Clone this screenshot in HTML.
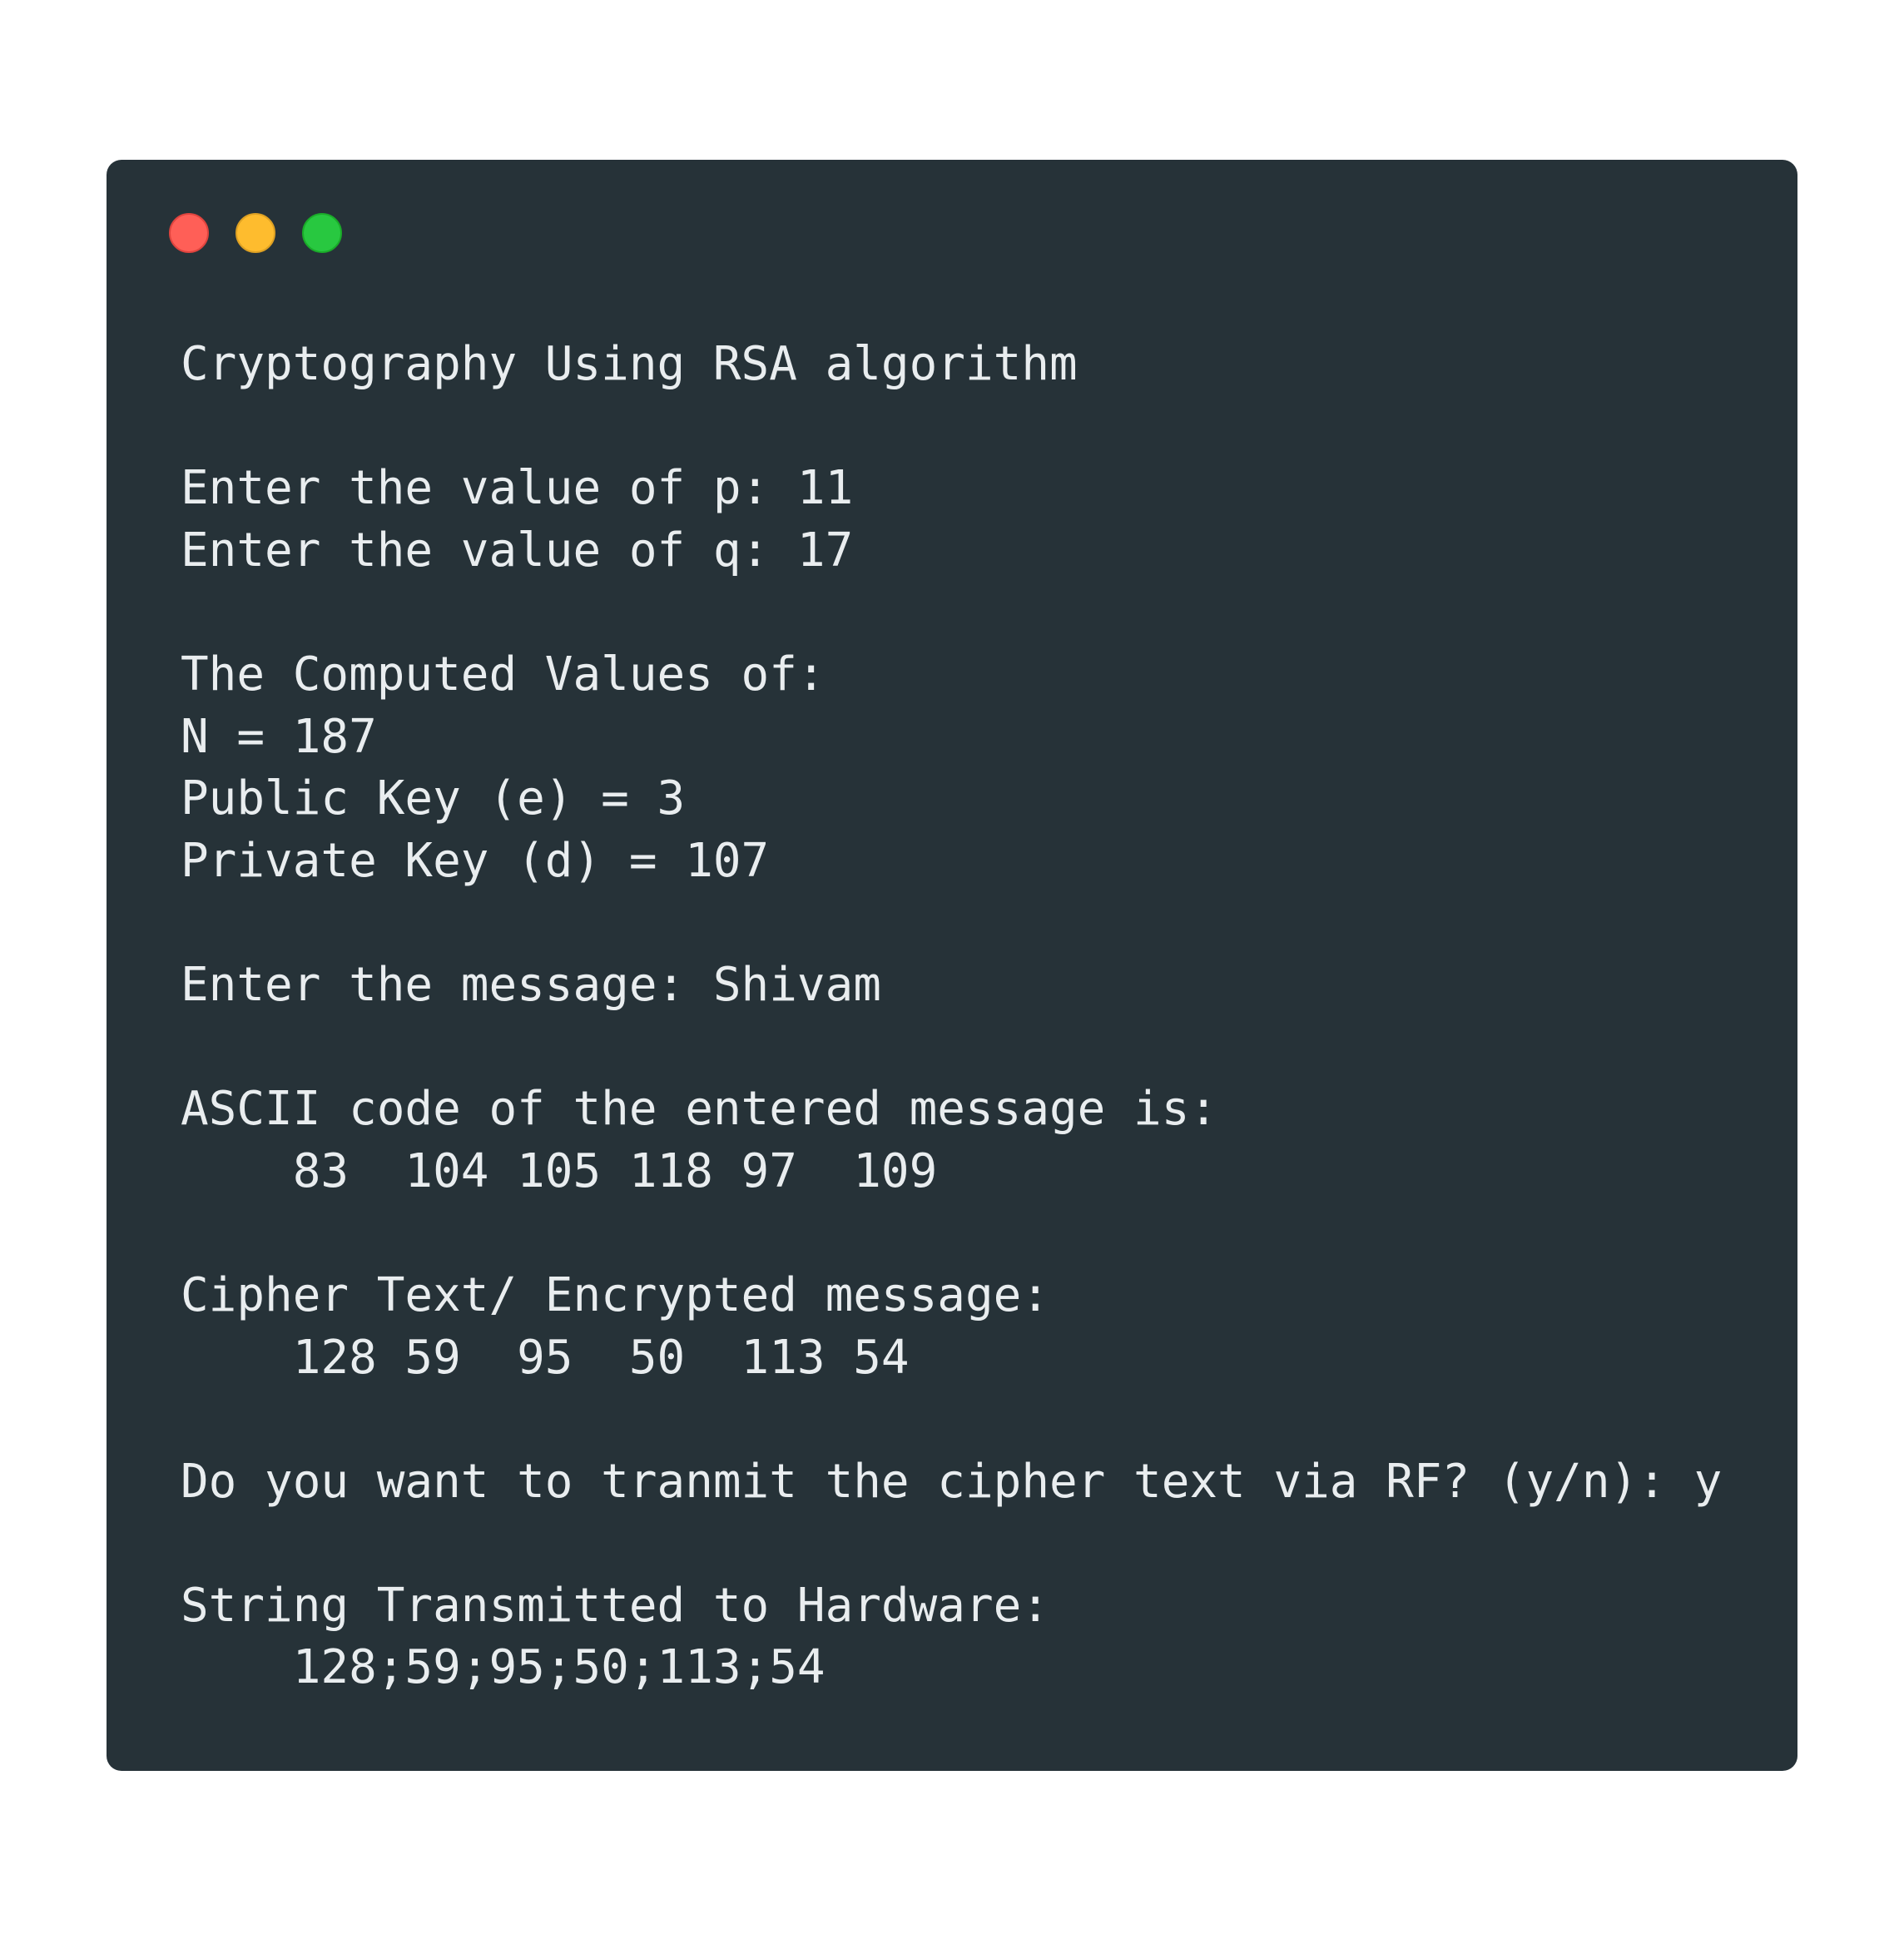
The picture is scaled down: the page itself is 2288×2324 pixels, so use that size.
<!DOCTYPE html>
<html><head><meta charset="utf-8"><style>
html,body{margin:0;padding:0;background:#fff;}
body{width:2288px;height:2324px;position:relative;overflow:hidden;}
.win{position:absolute;left:128px;top:192px;width:2032px;height:1936px;background:#263238;border-radius:18px;}
.dot{position:absolute;top:256px;width:48px;height:48px;border-radius:50%;box-sizing:border-box;}
pre{position:absolute;left:217px;top:401px;margin:0;font-family:"DejaVu Sans Mono","Liberation Mono",monospace;font-size:55.95px;line-height:74.6px;color:#e9edef;}
</style></head><body>
<div class="win"></div>
<div class="dot" style="left:203px;background:#ff5f57;border:2px solid #e0443e"></div>
<div class="dot" style="left:283px;background:#febc2e;border:2px solid #dea123"></div>
<div class="dot" style="left:363px;background:#28c840;border:2px solid #1aab29"></div>
<pre>Cryptography Using RSA algorithm

Enter the value of p: 11
Enter the value of q: 17

The Computed Values of:
N = 187
Public Key (e) = 3
Private Key (d) = 107

Enter the message: Shivam

ASCII code of the entered message is:
    83  104 105 118 97  109

Cipher Text/ Encrypted message:
    128 59  95  50  113 54

Do you want to tranmit the cipher text via RF? (y/n): y

String Transmitted to Hardware:
    128;59;95;50;113;54</pre>
</body></html>
